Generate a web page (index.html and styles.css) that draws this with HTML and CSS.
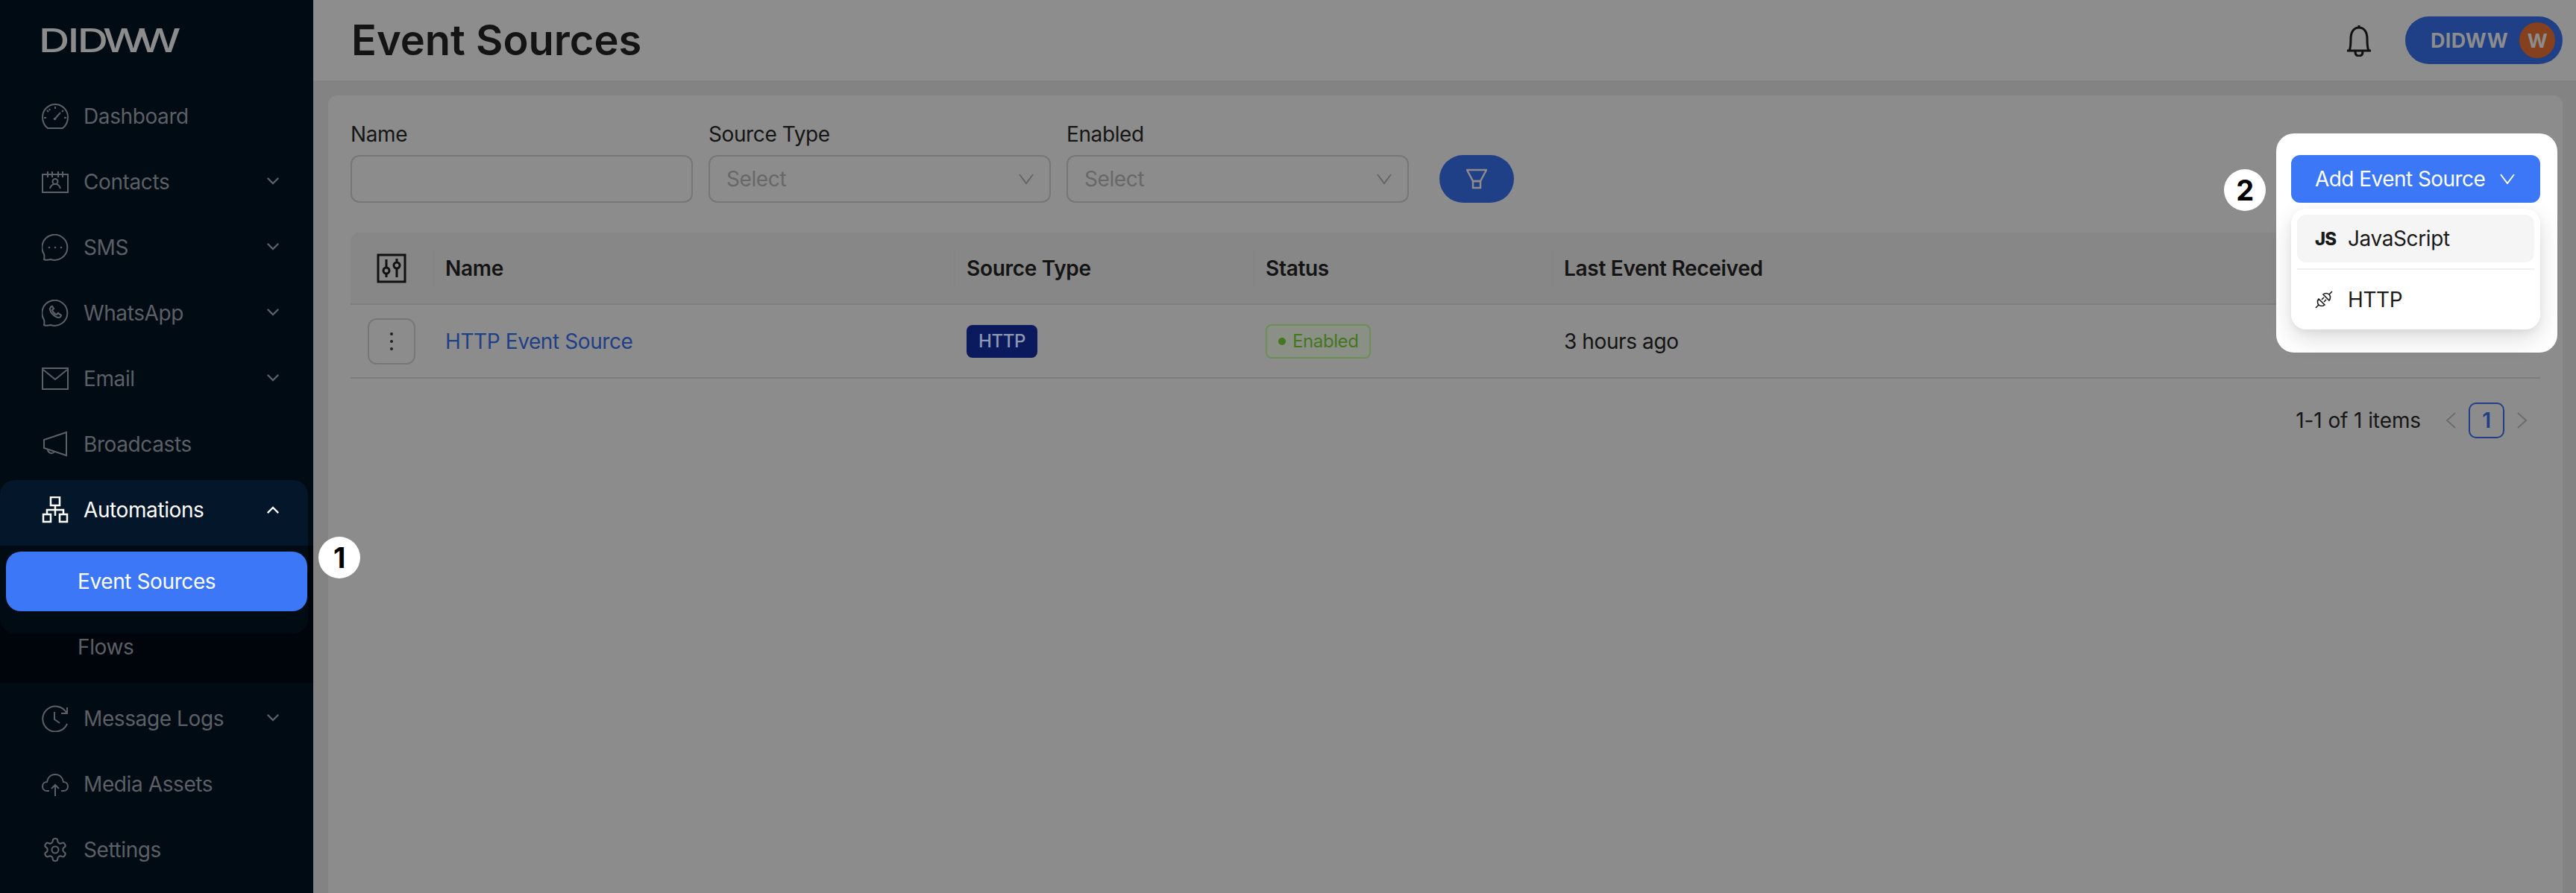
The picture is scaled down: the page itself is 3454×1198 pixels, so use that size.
FILE: index.html
```html
<!DOCTYPE html>
<html lang="en">
<head>
<meta charset="utf-8">
<title>Event Sources</title>
<link rel="stylesheet" href="styles.css">
</head>
<body>
<div class="app">
  <aside class="sidebar">
    <div class="logo"><svg class="logo-svg" viewBox="0 0 200 44"><text class="logo-text" x="-3" y="36" dx="0 -2 -2 -5 -9" transform="scale(1.3 1)">DIDWW</text></svg></div>
    <nav class="nav">
      <a class="nav-item"><svg class="nav-icon" viewBox="0 0 36 36"><path d="M8 34C4 31 1 25 1 19A17 17 0 0 1 35 19C35 25 32 31 28 34Z"/><path d="M18 21l7-8M18 5v3M7 10l2 2M29 10l-2 2M3 20h3M33 20h-3M10 8l1 2"/><circle class="dot" cx="17.500" cy="21.500" r="1.800"/></svg><span class="nav-label">Dashboard</span></a>
      <a class="nav-item"><svg class="nav-icon" viewBox="0 0 36 36"><path d="M1 8H35V32H1Z"/><path d="M8 4v8M14 4v8M22 4v8M28 4v8"/><circle cx="18" cy="17.500" r="3.500"/><path d="M11 27c1-4 4-6 7-6s6 2 7 6"/></svg><span class="nav-label">Contacts</span><svg class="chev" viewBox="0 0 20 12"><path d="M2 2l8 8 8-8"/></svg></a>
      <a class="nav-item"><svg class="nav-icon" viewBox="0 0 36 36"><path d="M3 27A17 17 0 1 1 12 34C8 35 5 35 3 34C3.500 32 3.500 29 3 27Z"/><circle class="dot" cx="10" cy="18" r="1.300"/><circle class="dot" cx="18" cy="18" r="1.300"/><circle class="dot" cx="26" cy="18" r="1.300"/></svg><span class="nav-label">SMS</span><svg class="chev" viewBox="0 0 20 12"><path d="M2 2l8 8 8-8"/></svg></a>
      <a class="nav-item"><svg class="nav-icon" viewBox="0 0 36 36"><path d="M3 27A17 17 0 1 1 12 34C8 35 5 35 3 34C3.500 32 3.500 29 3 27Z"/><path class="thick" d="M12 10c-2 2-1 6 3 10s8 5 10 3l1-2-4-3-2 2c-2 0-5-3-6-6l2-2-2-3z"/></svg><span class="nav-label">WhatsApp</span><svg class="chev" viewBox="0 0 20 12"><path d="M2 2l8 8 8-8"/></svg></a>
      <a class="nav-item"><svg class="nav-icon" viewBox="0 0 36 36"><path d="M1 4H35V32H1Z"/><path d="M2 6L18 19L34 6"/></svg><span class="nav-label">Email</span><svg class="chev" viewBox="0 0 20 12"><path d="M2 2l8 8 8-8"/></svg></a>
      <a class="nav-item"><svg class="nav-icon" viewBox="0 0 36 36"><path d="M33 2V33L3 23V12Z"/><path d="M8 25a5 5 0 0 0 9 3"/></svg><span class="nav-label">Broadcasts</span></a>
      <div class="group">
        <a class="nav-item nav-open"><svg class="nav-icon icon-white" viewBox="0 0 36 36"><path d="M12 1H24V12H12ZM2 24H12V34H2ZM24 24H34V34H24Z"/><path d="M18 12V18M7 24V18H29V24M18 18V26"/></svg><span class="nav-label">Automations</span><svg class="chev chev-white" viewBox="0 0 20 12"><path d="M2 10l8-8 8 8"/></svg></a>
        <div class="submenu">
          <div class="sub-panel"><a class="sub-active">Event Sources</a></div>
          <a class="sub-item">Flows</a>
        </div>
      </div>
      <a class="nav-item nav-after"><svg class="nav-icon" viewBox="0 0 36 36"><path d="M33 10A17 17 0 1 0 34 25"/><path d="M34 3V11H26"/><path d="M17 9V19L24 24"/></svg><span class="nav-label">Message Logs</span><svg class="chev" viewBox="0 0 20 12"><path d="M2 2l8 8 8-8"/></svg></a>
      <a class="nav-item"><svg class="nav-icon" viewBox="0 0 36 36"><path d="M10 27H7C3 27 1 24 1 21C1 17 4 15 7 15C8 9 12 5 18 5C24 5 28 9 29 15C32 15 35 17 35 21C35 24 33 27 29 27H26"/><path d="M18 34V19M13 24L18 19L23 24"/></svg><span class="nav-label">Media Assets</span></a>
      <a class="nav-item"><svg class="nav-icon nav-gear" viewBox="0 0 24 24"><path d="M12.220 2h-.44a2 2 0 0 0-2 2v.18a2 2 0 0 1-1 1.730l-.43.25a2 2 0 0 1-2 0l-.15-.08a2 2 0 0 0-2.730.73l-.22.38a2 2 0 0 0 .73 2.730l.15.1a2 2 0 0 1 1 1.720v.51a2 2 0 0 1-1 1.740l-.15.09a2 2 0 0 0-.73 2.730l.22.38a2 2 0 0 0 2.730.73l.15-.08a2 2 0 0 1 2 0l.43.25a2 2 0 0 1 1 1.730V20a2 2 0 0 0 2 2h.44a2 2 0 0 0 2-2v-.18a2 2 0 0 1 1-1.730l.43-.25a2 2 0 0 1 2 0l.15.08a2 2 0 0 0 2.730-.73l.22-.39a2 2 0 0 0-.73-2.730l-.15-.08a2 2 0 0 1-1-1.740v-.5a2 2 0 0 1 1-1.740l.15-.09a2 2 0 0 0 .73-2.730l-.22-.38a2 2 0 0 0-2.730-.73l-.15.08a2 2 0 0 1-2 0l-.43-.25a2 2 0 0 1-1-1.730V4a2 2 0 0 0-2-2z"/><circle cx="12" cy="12" r="3"/></svg><span class="nav-label">Settings</span></a>
    </nav>
  </aside>
  <main class="main">
    <header class="topbar">
      <h1 class="title">Event Sources</h1>
      <svg class="bell" viewBox="0 0 34 44"><path d="M1 36H33M4 36C6 32 6 28 6 20C6 11 10 5 17 5C24 5 28 11 28 20C28 28 28 32 30 36M17 5V2M12 37C12 41 14 43 17 43C20 43 22 41 22 37"/></svg>
      <div class="account"><span class="account-name">DIDWW</span><span class="avatar">W</span></div>
    </header>
    <section class="card">
      <div class="filters">
        <div class="field"><label class="field-label">Name</label><div class="control"></div></div>
        <div class="field"><label class="field-label">Source Type</label><div class="control"><span class="placeholder">Select</span><svg class="select-chev" viewBox="0 0 20 14"><path d="M1 1l9 12 9-12"/></svg></div></div>
        <div class="field"><label class="field-label">Enabled</label><div class="control"><span class="placeholder">Select</span><svg class="select-chev" viewBox="0 0 20 14"><path d="M1 1l9 12 9-12"/></svg></div></div>
        <div class="filter-btn"><svg class="filter-icon" viewBox="0 0 28 28"><path d="M1 2H27L19 17H9Z"/><path d="M9 17H19V26H9Z"/></svg></div>
      </div>
      <table class="table">
        <colgroup><col class="col-a"><col class="col-b"><col class="col-c"><col class="col-d"><col></colgroup>
        <thead>
          <tr>
            <th class="cell-config"><svg class="config-icon" viewBox="0 0 40 40"><path d="M2 2H38V38H2Z"/><path d="M13 8V19M13 27V32M27 7V12M27 20V32"/><circle cx="13" cy="23" r="4"/><circle cx="27" cy="16" r="4"/></svg></th>
            <th><span class="th-in">Name</span></th>
            <th><span class="th-in">Source Type</span></th>
            <th><span class="th-in">Status</span></th>
            <th><span class="th-in">Last Event Received</span></th>
          </tr>
        </thead>
        <tbody>
          <tr>
            <td class="cell-action"><span class="dots-btn"><i class="dot-v"></i><i class="dot-v"></i><i class="dot-v"></i></span></td>
            <td class="td-pad"><a class="link">HTTP Event Source</a></td>
            <td class="td-pad"><span class="tag-http">HTTP</span></td>
            <td class="td-pad"><span class="tag-ok"><i class="ok-dot"></i>Enabled</span></td>
            <td class="td-pad">3 hours ago</td>
          </tr>
        </tbody>
      </table>
      <div class="pager">
        <span class="pager-text">1-1 of 1 items</span>
        <svg class="pager-chev" viewBox="0 0 14 24"><path d="M13 2L2 12L13 22"/></svg>
        <span class="page">1</span>
        <svg class="pager-chev" viewBox="0 0 14 24"><path d="M1 2L12 12L1 22"/></svg>
      </div>
    </section>
  </main>
</div>

<div class="hl-panel">
  <button class="add-btn">Add Event Source<svg class="add-chev" viewBox="0 0 20 14"><path d="M1 1l9 12 9-12"/></svg></button>
  <div class="menu">
    <div class="menu-item menu-hover"><span class="js-icon">JS</span>JavaScript</div>
    <div class="menu-sep"></div>
    <div class="menu-item"><svg class="plug" viewBox="0 0 24 24"><path d="M5 11L13 19C11 21 7 21 5 19C3 17 3 13 5 11Z"/><path d="M11 5L19 13C21 11 21 7 19 5C17 3 13 3 11 5Z"/><path d="M1 23L5 19M23 1L19 5M9 12L12 9M12 15L15 12"/></svg>HTTP</div>
  </div>
</div>
<span class="badge badge-one">1</span>
<span class="badge badge-two">2</span>
</body>
</html>
```
FILE: styles.css
```css
* { box-sizing: border-box; }
html, body { margin: 0; height: 100%; }
body { font-family: Inter, "Liberation Sans", sans-serif; font-size: 28px; letter-spacing: -0.4px; color: #141414; background: #838383; overflow: hidden; }
.app { display: flex; height: 1198px; }

.sidebar { width: 420px; flex: none; background: #010b14; overflow: hidden; }
.logo { height: 112px; padding: 34px 0 0 56px; }
.logo-svg { display: block; width: 200px; height: 44px; overflow: visible; }
.logo-text { font-family: Inter, sans-serif; font-size: 44px; font-weight: 500; letter-spacing: 0; fill: #8c8c8c; }
.nav { display: flex; flex-direction: column; }
.nav-item { display: flex; align-items: center; height: 88px; padding-left: 56px; color: #5c6066; flex: none; }
.nav-icon { width: 36px; height: 36px; flex: none; fill: none; stroke: #5c6066; stroke-width: 2; }
.nav-icon .dot { fill: #5c6066; stroke: none; }
.nav-icon .thick { stroke-width: 2.200; }
.nav-gear { stroke-width: 1.400; }
.nav-label { margin-left: 20px; flex: 1; }
.chev { width: 18px; height: 11px; margin: 0 45px 4px 0; fill: none; stroke: #5c6066; stroke-width: 2.500; }
.group { margin-top: 4px; }
.nav-open { width: 413px; padding-bottom: 8px; background: #03162a; color: #fff; border-radius: 20px 20px 0 0; }
.icon-white { stroke: #fff; stroke-width: 2.500; }
.chev-white { stroke: #fff; margin: 0 38px 0 0; }
.submenu { background: #00050b; height: 184px; }
.sub-panel { width: 413px; height: 118px; padding: 8px 1px 30px 8px; background: #010b14; border-radius: 0 0 20px 20px; }
.sub-active { display: flex; align-items: center; height: 80px; padding-left: 96px; background: #3b77f6; color: #fff; border-radius: 20px; }
.sub-item { display: flex; align-items: center; height: 36px; padding-left: 104px; color: #5c6066; }
.nav-after { margin-top: 4px; }

.main { flex: 1; min-width: 0; display: flex; flex-direction: column; }
.topbar { height: 108px; flex: none; background: #8d8d8d; display: flex; align-items: center; padding: 0 18px 0 51px; }
.title { margin: 0 auto 0 0; font-size: 56px; font-weight: 600; color: #141414; letter-spacing: 0; }
.bell { width: 34px; height: 44px; margin-right: 45px; fill: none; stroke: #111; stroke-width: 3; }
.account { width: 211px; height: 64px; border-radius: 32px; background: #1f3f87; display: flex; align-items: center; padding-left: 34px; }
.account-name { flex: 1; font-size: 27px; font-weight: 700; color: #8c8c8c; letter-spacing: .3px; }
.avatar { width: 48px; height: 48px; margin-right: 10px; border-radius: 50%; background: #85401d; color: #8c8c8c; font-size: 26px; font-weight: 700; display: flex; align-items: center; justify-content: center; }

.card { flex: 1; margin: 20px 18px 0 20px; padding: 36px 30px 0; background: #8c8c8c; border-radius: 12px 12px 0 0; }
.filters { display: flex; align-items: flex-end; gap: 21px; }
.field { width: 459px; }
.field-label { display: block; height: 32px; line-height: 32px; margin-bottom: 12px; color: #161616; }
.control { height: 64px; border: 2px solid #777; border-radius: 12px; display: flex; align-items: center; justify-content: space-between; padding: 0 21px 0 22px; }
.placeholder { color: #686868; }
.select-chev { width: 20px; height: 14px; fill: none; stroke: #666; stroke-width: 2; }
.filter-btn { width: 100px; height: 64px; margin-left: 20px; border-radius: 32px; background: #1f3f87; display: flex; align-items: center; justify-content: center; }
.filter-icon { width: 28px; height: 28px; fill: none; stroke: #8c8c8c; stroke-width: 2.500; }

.table { width: 2936px; margin-top: 40px; border-collapse: separate; border-spacing: 0; table-layout: fixed; }
.col-a { width: 110px; }
.col-b { width: 699px; }
.col-c { width: 401px; }
.col-d { width: 400px; }
.table th { height: 97px; padding: 0; background: #878787; border-bottom: 2px solid #7d7d7d; text-align: left; font-weight: 600; letter-spacing: -0.3px; color: #141414; }
.table th:first-child { border-top-left-radius: 12px; }
.table th:last-child { border-top-right-radius: 12px; }
.cell-config { padding-left: 35px !important; }
.config-icon { display: block; width: 40px; height: 40px; fill: none; stroke: #111; stroke-width: 3; }
.th-in { display: flex; align-items: center; height: 46px; padding-left: 15px; border-left: 2px solid #848484; }
.table td { height: 99px; padding: 0; border-bottom: 2px solid #7d7d7d; }
.td-pad { padding-left: 17px !important; }
.cell-action { padding-left: 23px !important; }
.dots-btn { width: 64px; height: 62px; border: 2px solid #777; border-radius: 12px; display: flex; flex-direction: column; align-items: center; justify-content: center; gap: 6px; }
.dot-v { width: 4px; height: 4px; border-radius: 50%; background: #222; }
.link { color: #1f3f87; }
.tag-http { display: inline-flex; align-items: center; height: 44px; padding: 0 16px; border-radius: 8px; background: #0b1a5c; color: #9097b3; font-size: 24px; font-weight: 500; vertical-align: middle; }
.tag-ok { display: inline-flex; align-items: center; height: 46px; padding: 0 15px; border: 2px solid #6b8f55; border-radius: 8px; background: #8b9087; color: #44761e; font-size: 24px; vertical-align: middle; }
.ok-dot { width: 10px; height: 10px; border-radius: 50%; background: #44761e; margin-right: 9px; }
.pager { display: flex; align-items: center; justify-content: flex-end; width: 2936px; height: 48px; margin-top: 32px; padding-right: 17px; }
.pager-text { margin-right: 33px; letter-spacing: -0.1px; color: #171717; }
.pager-chev { width: 14px; height: 24px; fill: none; stroke: #6c6c6c; stroke-width: 2; }
.page { width: 48px; height: 48px; margin: 0 17px; border: 2px solid #1f3f87; border-radius: 10px; color: #1f3f87; font-weight: 600; display: flex; align-items: center; justify-content: center; }

.hl-panel { position: absolute; left: 3052px; top: 179px; width: 377px; height: 294px; padding: 29px 23px 0 20px; background: #fff; border-radius: 24px; }
.add-btn { width: 334px; height: 64px; padding: 0 34px 0 32px; border: 0; border-radius: 12px; background: #3b77f6; color: #fff; font: inherit; letter-spacing: -0.55px; display: flex; align-items: center; justify-content: space-between; }
.add-chev { width: 20px; height: 14px; fill: none; stroke: #fff; stroke-width: 2; }
.menu { margin-top: 8px; width: 334px; height: 162px; padding: 8px; background: #fff; border-radius: 20px; box-shadow: 0 12px 32px rgba(0,0,0,.14), 0 4px 10px rgba(0,0,0,.05); }
.menu-item { display: flex; align-items: center; height: 64px; padding-left: 24px; border-radius: 12px; color: #1a1a1a; }
.menu-hover { background: #f5f5f5; }
.menu-sep { height: 2px; margin: 8px 0 8px; background: #f0f0f0; }
.js-icon { width: 44px; font-size: 24px; font-weight: 800; letter-spacing: -1px; color: #1a1a1a; }
.plug { width: 24px; height: 24px; margin-right: 20px; fill: none; stroke: #1a1a1a; stroke-width: 1.600; }
.badge { position: absolute; width: 56px; height: 56px; border-radius: 50%; background: #fff; color: #000; font-size: 38px; font-weight: 700; display: flex; align-items: center; justify-content: center; }
.badge-one { left: 427px; top: 720px; }
.badge-two { left: 2982px; top: 227px; }
```
